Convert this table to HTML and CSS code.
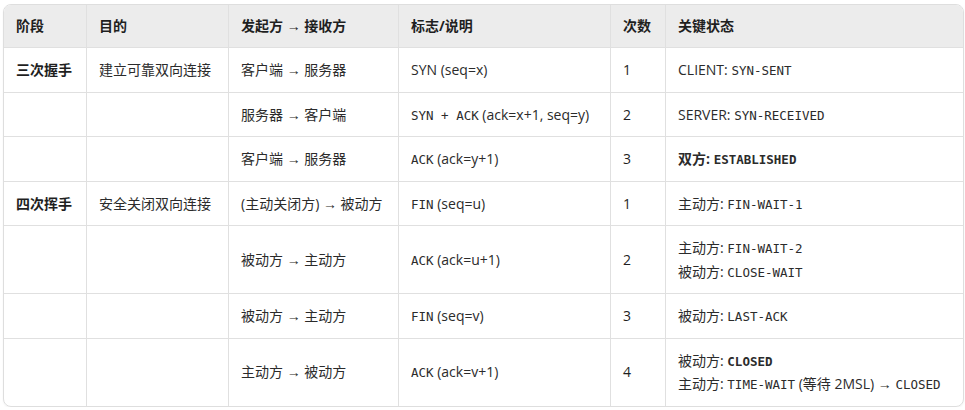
FILE: index.html
```html
<!DOCTYPE html>
<html lang="zh-CN">
<head>
<meta charset="utf-8">
<title>TCP 握手与挥手</title>
<link rel="stylesheet" href="styles.css">
</head>
<body>
<div class="page">
  <div class="table-wrap">
    <table class="tcp">
      <colgroup>
        <col class="c1"><col class="c2"><col class="c3"><col class="c4"><col class="c5"><col class="c6">
      </colgroup>
      <thead>
        <tr>
          <th>阶段</th><th>目的</th><th>发起方 → 接收方</th><th>标志/说明</th><th>次数</th><th>关键状态</th>
        </tr>
      </thead>
      <tbody>
        <tr>
          <td class="strong">三次握手</td>
          <td>建立可靠双向连接</td>
          <td>客户端 → 服务器</td>
          <td>SYN (seq=x)</td>
          <td class="num">1</td>
          <td>CLIENT: <code>SYN-SENT</code></td>
        </tr>
        <tr>
          <td></td><td></td>
          <td>服务器 → 客户端</td>
          <td><code>SYN + ACK</code> (ack=x+1, seq=y)</td>
          <td class="num">2</td>
          <td>SERVER: <code>SYN-RECEIVED</code></td>
        </tr>
        <tr>
          <td></td><td></td>
          <td>客户端 → 服务器</td>
          <td><code>ACK</code> (ack=y+1)</td>
          <td class="num">3</td>
          <td><b>双方:</b> <code class="b">ESTABLISHED</code></td>
        </tr>
        <tr>
          <td class="strong">四次挥手</td>
          <td>安全关闭双向连接</td>
          <td>(主动关闭方) → 被动方</td>
          <td><code>FIN</code> (seq=u)</td>
          <td class="num">1</td>
          <td>主动方: <code>FIN-WAIT-1</code></td>
        </tr>
        <tr>
          <td></td><td></td>
          <td>被动方 → 主动方</td>
          <td><code>ACK</code> (ack=u+1)</td>
          <td class="num">2</td>
          <td>主动方: <code>FIN-WAIT-2</code><br>被动方: <code>CLOSE-WAIT</code></td>
        </tr>
        <tr>
          <td></td><td></td>
          <td>被动方 → 主动方</td>
          <td><code>FIN</code> (seq=v)</td>
          <td class="num">3</td>
          <td>被动方: <code>LAST-ACK</code></td>
        </tr>
        <tr>
          <td></td><td></td>
          <td>主动方 → 被动方</td>
          <td><code>ACK</code> (ack=v+1)</td>
          <td class="num">4</td>
          <td>被动方: <code class="b">CLOSED</code><br>主动方: <code>TIME-WAIT</code> (等待 2MSL) → <code>CLOSED</code></td>
        </tr>
      </tbody>
    </table>
  </div>
</div>
</body>
</html>
```

FILE: styles.css
```css
html, body {
  margin: 0;
  padding: 0;
  background: #ffffff;
}

.page {
  padding: 4px 2px 0 3px;
}

.table-wrap {
  width: 961px;
  border: 1px solid #dedede;
  border-radius: 8px;
  overflow: hidden;
  box-sizing: border-box;
  box-shadow: 0 1px 2px rgba(0, 0, 0, 0.05);
}

.tcp {
  width: 100%;
  border-collapse: separate;
  border-spacing: 0;
  table-layout: fixed;
  font-family: "Open Sans", "Liberation Sans", "Noto Sans CJK SC", sans-serif;
  font-size: 14px;
  color: #2b2b2b;
}

.c1 { width: 83px; }
.c2 { width: 142px; }
.c3 { width: 170px; }
.c4 { width: 212px; }
.c5 { width: 55px; }

.tcp th,
.tcp td {
  text-align: left;
  vertical-align: middle;
  border-right: 1px solid #e0e0e0;
  border-bottom: 1px solid #e0e0e0;
  padding: 10px 12px;
  line-height: 23.5px;
  white-space: nowrap;
}

.tcp th {
  background: #ececec;
  font-weight: 700;
  color: #1f1f1f;
  padding-top: 9.25px;
  padding-bottom: 9.25px;
}

.tcp th:last-child,
.tcp td:last-child {
  border-right: none;
}

.tcp tbody tr:last-child td {
  border-bottom: none;
}

.tcp td.strong {
  font-weight: 700;
  color: #1f1f1f;
}

.tcp td.num {
  color: #1f1f1f;
}

.tcp code {
  font-family: "DejaVu Sans Mono", "Liberation Mono", monospace;
  font-size: 12.5px;
  line-height: 1;
}

.tcp code.b,
.tcp b {
  font-weight: 700;
}
```
